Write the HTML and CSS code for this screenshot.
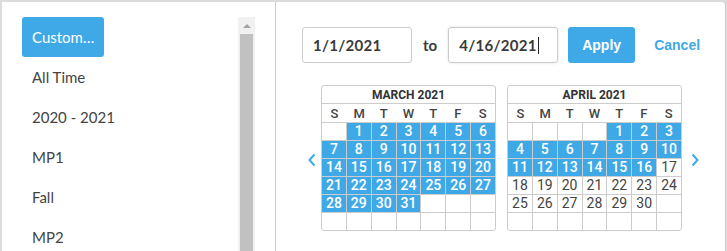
FILE: index.html
```html
<!DOCTYPE html>
<html lang="en">
<head>
    <meta charset="UTF-8">
    <title>Date Range</title>

    <link rel="stylesheet" href="styles.css">
</head>

<body>

    <div class="picker">

        <div class="ranges">
            <ul class="range-list">
                <li class="active">Custom…</li>
                <li>All Time</li>
                <li>2020 - 2021</li>
                <li>MP1</li>
                <li>Fall</li>
                <li>MP2</li>
            </ul>
            <div class="scrollbar">
                <div class="scroll-up"></div>
                <div class="scroll-thumb"></div>
            </div>
        </div>

        <div class="custom">
            <div class="date-row">
                <input type="text" class="date-input" value="1/1/2021">
                <span class="to">to</span>
                <div class="date-input focused">4/16/2021<span class="caret"></span></div>
                <button type="button" class="apply">Apply</button>
                <a class="cancel">Cancel</a>
            </div>

            <div class="calendars">
                <span class="nav nav-prev">
                    <svg width="10" height="14" viewBox="0 0 10 14"><path d="M7.5 1.5 L2.5 7 L7.5 12.5" fill="none" stroke="#3fa9e8" stroke-width="2"/></svg>
                </span>
                <div class="month" id="month_march"></div>
                <div class="month" id="month_april"></div>
                <span class="nav nav-next">
                    <svg width="10" height="14" viewBox="0 0 10 14"><path d="M2.5 1.5 L7.5 7 L2.5 12.5" fill="none" stroke="#3fa9e8" stroke-width="2"/></svg>
                </span>
            </div>
        </div>

    </div>

    <script>
        // builds one month grid, days inside the selected range are blue
        function buildMonth(el, title, year, month, from, to) {
            var first = new Date(year, month, 1).getDay();
            var days = new Date(year, month + 1, 0).getDate();
            var html = "<div class='month-title'>" + title + "</div>";
            html += "<div class='weekdays'><span>S</span><span>M</span><span>T</span><span>W</span><span>T</span><span>F</span><span>S</span></div>";
            html += "<div class='days'>";
            for (var i = 0; i < 42; i++) {
                var d = i - first + 1;
                if (d < 1 || d > days) {
                    html += "<span class='day'></span>";
                } else {
                    var t = new Date(year, month, d).getTime();
                    var cls = (t >= from && t <= to) ? "day in-range" : "day";
                    html += "<span class='" + cls + "'>" + d + "</span>";
                }
            }
            html += "</div>";
            el.innerHTML = html;
        }

        var rangeFrom = new Date(2021, 0, 1).getTime();
        var rangeTo = new Date(2021, 3, 16).getTime();
        buildMonth(document.getElementById("month_march"), "MARCH 2021", 2021, 2, rangeFrom, rangeTo);
        buildMonth(document.getElementById("month_april"), "APRIL 2021", 2021, 3, rangeFrom, rangeTo);
    </script>
</body></html>
```

FILE: styles.css
```css
* {
    box-sizing: border-box;
}
html, body {
    margin: 0;
    height: 100%;
    overflow: hidden;
}
body {
    background-color: #dcdcdc;
    font-family: Lato, "Open Sans", sans-serif;
    color: #444;
}
.picker {
    display: flex;
    margin: 2px 0 0 2px;
    width: 723px;
    height: 260px;
    background-color: #fff;
    border-top-right-radius: 4px;
    box-shadow: 1px 0 0 #cfcfcf;
}

/* left column with preset ranges */
.ranges {
    display: flex;
    width: 274px;
    padding: 15px 20px 0 20px;
    border-right: 1px solid #cccccc;
}
.range-list {
    flex: 1;
    list-style: none;
    margin: 0;
    padding: 0;
}
.range-list li {
    height: 40px;
    line-height: 40px;
    padding-left: 10px;
    font-size: 15px;
    color: #444;
}
.range-list li.active {
    width: 82px;
    background-color: #3fa9e8;
    color: #fff;
    border-radius: 3px;
}
.scrollbar {
    width: 17px;
    background-color: #f1f1f1;
    display: flex;
    flex-direction: column;
    align-items: center;
}
.scroll-up {
    width: 0;
    height: 0;
    margin: 7px 0 6px 0;
    border-left: 4px solid transparent;
    border-right: 4px solid transparent;
    border-bottom: 4px solid #a3a3a3;
}
.scroll-thumb {
    flex: 1;
    width: 13px;
    background-color: #c1c1c1;
}

/* right column */
.custom {
    flex: 1;
    padding: 25px 0 0 26px;
}
.date-row {
    display: flex;
    align-items: center;
    height: 36px;
}
.date-input {
    width: 110px;
    height: 36px;
    padding: 0 0 0 10px;
    border: 1px solid #cccccc;
    border-radius: 3px;
    font-family: Lato, "Open Sans", sans-serif;
    font-size: 15px;
    font-weight: bold;
    color: #3a3a3a;
    line-height: 34px;
    letter-spacing: 0.3px;
}
.date-input.focused {
    box-shadow: 0 0 3px rgba(0, 0, 0, 0.12);
}
.caret {
    display: inline-block;
    width: 1px;
    height: 17px;
    margin-left: 1px;
    vertical-align: -3px;
    background-color: #222;
}
.to {
    margin: 0 11px 0 11px;
    font-size: 15px;
    font-weight: bold;
    color: #3a3a3a;
}
.apply {
    width: 67px;
    height: 36px;
    margin-left: 10px;
    border: none;
    border-radius: 3px;
    background-color: #3fa9e8;
    color: #fff;
    font-family: "Liberation Sans", Arial, sans-serif;
    font-size: 14px;
    font-weight: bold;
}
.cancel {
    margin-left: 19px;
    color: #3fa9e8;
    font-family: "Liberation Sans", Arial, sans-serif;
    font-size: 14px;
    font-weight: bold;
}

/* calendars */
.calendars {
    display: flex;
    align-items: center;
    margin-top: 22px;
}
.nav {
    display: flex;
    justify-content: center;
    width: 19px;
    padding-top: 4px;
}
.nav-next {
    width: 26px;
}
.month {
    width: 175px;
    border: 1px solid #cccccc;
    border-radius: 3px;
    font-family: Roboto, sans-serif;
    overflow: hidden;
}
.month + .month {
    margin-left: 11px;
}
.month-title {
    height: 18px;
    line-height: 18px;
    text-align: center;
    font-size: 12px;
    font-weight: bold;
    color: #333;
    border-bottom: 1px solid #cccccc;
}
.weekdays {
    display: grid;
    grid-template-columns: repeat(7, 1fr);
    height: 19px;
    line-height: 19px;
    border-bottom: 1px solid #cccccc;
    font-size: 13px;
    font-weight: 500;
    color: #444;
    text-align: center;
}
.days {
    display: grid;
    grid-template-columns: repeat(7, 1fr);
    grid-auto-rows: 17px;
    gap: 1px;
    background-color: #cccccc;
}
.day {
    background-color: #fff;
    text-align: center;
    line-height: 17px;
    font-size: 14px;
    color: #444;
}
.day.in-range {
    background-color: #3fa9e8;
    color: #fff;
    font-weight: 500;
}
```
